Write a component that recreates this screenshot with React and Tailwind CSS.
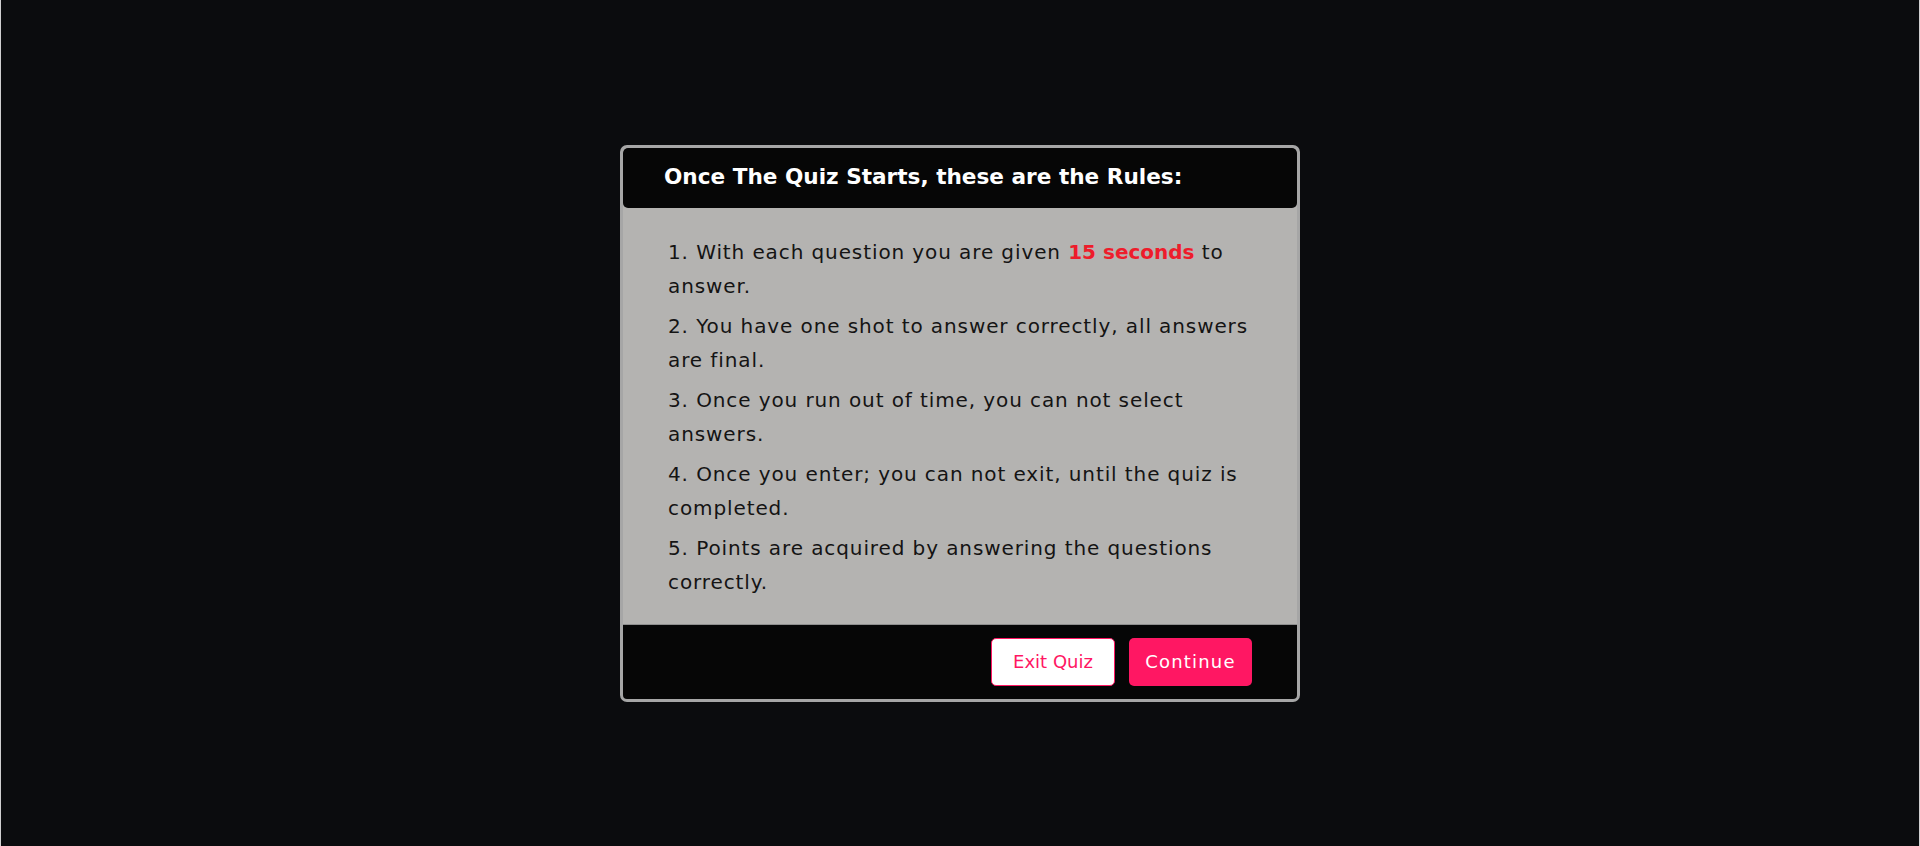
import React from "react";

const rules = [
  [<>1. With each question you are given <span className="font-semibold tracking-normal text-[#ee1c2b]">15 seconds</span> to</>, "answer."],
  ["2. You have one shot to answer correctly, all answers", "are final."],
  ["3. Once you run out of time, you can not select", "answers."],
  ["4. Once you enter; you can not exit, until the quiz is", "completed."],
  ["5. Points are acquired by answering the questions", "correctly."],
];

export default function App() {
  return (
    <div
      className="min-h-[846px] w-full bg-[#0b0c0e] border-x border-[#d0d0d0] flex items-center justify-center"
      style={{ fontFamily: "'DejaVu Sans', Inter, sans-serif" }}
    >
      <div className="w-[680px] border-[3px] border-[#a6a6a6] rounded-[7px] bg-[#b4b3b1] flex flex-col overflow-hidden">
        <div className="h-[60px] bg-[#060606] rounded-[5px] flex items-center pl-[41px]">
          <h1 className="text-[21.6px] font-bold text-white">
            Once The Quiz Starts, these are the Rules:
          </h1>
        </div>
        <div className="pl-[45px] pr-[10px] pt-[27px] pb-[25px] flex flex-col gap-[6px] text-[20px] leading-[34px] tracking-[0.9px] text-[#141414]">
          {rules.map((r, i) => (
            <p key={i} className="whitespace-nowrap">
              {r[0]}
              <br />
              {r[1]}
            </p>
          ))}
        </div>
        <div className="h-[75px] bg-[#060606] border-t border-[#8e8e8e] flex items-center justify-end gap-[14px] pr-[45px]">
          <button className="w-[124px] h-[48px] bg-white border border-[#ff1763] rounded-[5px] text-[18px] text-[#ff1763]">
            Exit Quiz
          </button>
          <button className="w-[123px] h-[48px] bg-[#ff1763] rounded-[5px] text-[18px] tracking-[1.2px] text-white">
            Continue
          </button>
        </div>
      </div>
    </div>
  );
}
